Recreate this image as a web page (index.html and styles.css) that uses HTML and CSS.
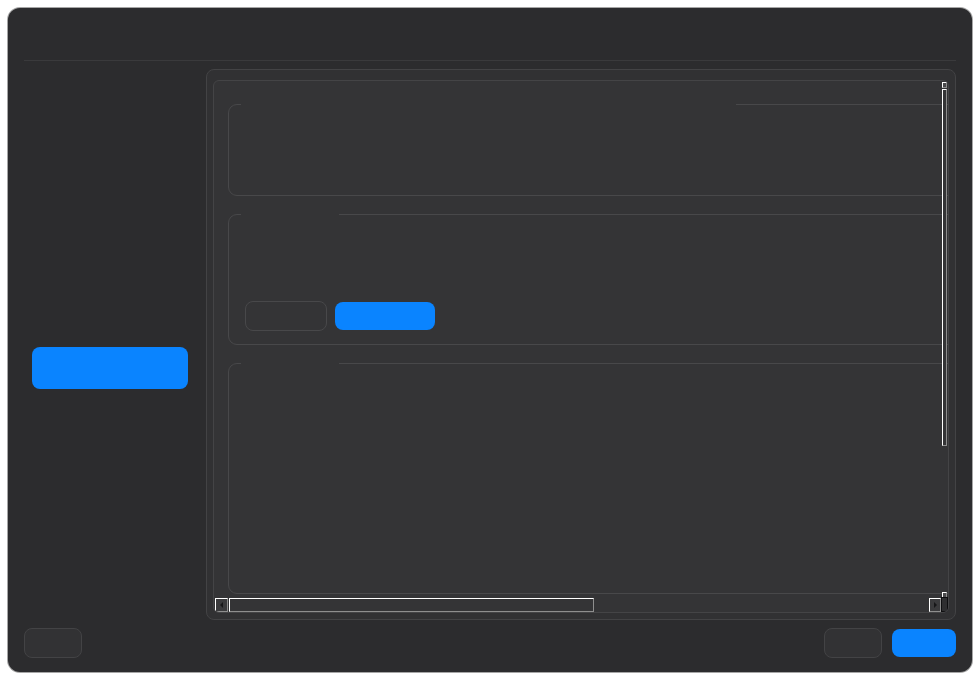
FILE: index.html
```html
<!DOCTYPE html>
<html lang="en">
<head>
<meta charset="utf-8">
<title>Dialog</title>
<link rel="stylesheet" href="styles.css">
</head>
<body>
<div class="dialog">
  <header class="dialog-header"></header>
  <div class="dialog-body">
    <aside class="sidebar">
      <button class="btn btn-primary side-btn" type="button"></button>
    </aside>
    <main class="panel">
      <div class="scroller">
        <div class="content">
          <fieldset class="group group-1">
            <legend class="legend legend-wide"></legend>
          </fieldset>
          <fieldset class="group group-2">
            <legend class="legend"></legend>
            <div class="group-actions">
              <button class="btn btn-outline btn-sm" type="button"></button>
              <button class="btn btn-primary btn-md" type="button"></button>
            </div>
          </fieldset>
          <fieldset class="group group-3">
            <legend class="legend"></legend>
          </fieldset>
        </div>
        <div class="vbar">
          <span class="vbar-btn vbar-up"></span>
          <span class="vbar-thumb"></span>
          <span class="vbar-btn vbar-down"></span>
        </div>
        <div class="hbar">
          <span class="hbar-btn hbar-left"><i class="arrow arrow-left"></i></span>
          <span class="hbar-thumb"></span>
          <span class="hbar-btn hbar-right"><i class="arrow arrow-right"></i></span>
        </div>
        <div class="sb-corner"></div>
      </div>
    </main>
  </div>
  <footer class="dialog-footer">
    <button class="btn btn-outline btn-foot" type="button"></button>
    <div class="footer-right">
      <button class="btn btn-outline btn-foot" type="button"></button>
      <button class="btn btn-primary btn-ok" type="button"></button>
    </div>
  </footer>
</div>
</body>
</html>
```

FILE: styles.css
```css
html, body {
  margin: 0;
  padding: 0;
  background: #ffffff;
  font-family: "Liberation Sans", Arial, sans-serif;
}

body {
  padding: 8px;
}

.dialog {
  width: 964px;
  height: 664px;
  box-sizing: border-box;
  background: #2c2c2e;
  border-radius: 12px;
  box-shadow: 0 0 0 1px rgba(0, 0, 0, 0.35);
  padding: 0 16px;
  display: flex;
  flex-direction: column;
}

.dialog-header {
  height: 53px;
  box-sizing: border-box;
  border-bottom: 1px solid #3a3a3c;
  flex: none;
}

.dialog-body {
  flex: none;
  height: 551px;
  margin-top: 8px;
  display: flex;
  gap: 8px;
  min-width: 0;
}

.sidebar {
  width: 174px;
  flex: none;
  box-sizing: border-box;
  padding: 278px 8px 0 8px;
}

.side-btn {
  width: 156px;
  height: 42px;
  border-radius: 8px;
}

.panel {
  flex: 1;
  min-width: 0;
  box-sizing: border-box;
  border: 1px solid #434345;
  border-radius: 8px;
  background: #313133;
  padding: 10px 6px 6px 6px;
  display: flex;
}

.scroller {
  position: relative;
  flex: 1;
  min-width: 0;
  min-height: 0;
  border: 1px solid #444446;
  border-radius: 6px;
  background: #343436;
  overflow: hidden;
}

.content {
  width: 1392px;
  box-sizing: border-box;
  padding: 23px 14px 0 14px;
  display: flex;
  flex-direction: column;
  gap: 18px;
}

.group {
  margin: 0;
  box-sizing: border-box;
  border: 1px solid #48484a;
  border-radius: 9px;
  padding: 0 16px 12px 16px;
  min-width: 0;
}

.legend {
  padding: 0;
  margin-left: -4px;
  width: 98px;
  height: 0;
  line-height: 0;
  font-size: 0;
}

.legend-wide {
  width: 495px;
}

.group-1 {
  height: 92px;
}

.group-2 {
  height: 131px;
}

.group-3 {
  height: 231px;
}

.group-actions {
  display: flex;
  align-items: center;
  gap: 8px;
  margin-top: 86px;
}

/* fake classic scrollbars drawn over the scroll area */
.vbar {
  position: absolute;
  left: 727px;
  top: 0;
  width: 7px;
  height: 517px;
}

.vbar > span,
.hbar > span {
  position: absolute;
  box-sizing: border-box;
  border-style: solid;
  border-width: 1px;
  border-color: #ffffff #8e8e8e #8e8e8e #ffffff;
  background: #343436;
}

.vbar-btn {
  left: 1px;
  width: 5px;
  height: 6px;
}

.vbar-up {
  top: 1px;
}

.vbar-down {
  top: 511px;
}

.vbar-thumb {
  left: 1px;
  top: 8px;
  width: 5px;
  height: 357px;
  border-right-width: 2px;
}

.hbar {
  position: absolute;
  left: 0;
  top: 517px;
  width: 727px;
  height: 14px;
}

.hbar-btn {
  top: 0;
  height: 14px;
  display: flex;
  align-items: center;
  justify-content: center;
}

.vbar > .vbar-btn {
  background: #4a4a4c;
}

.hbar > .hbar-btn {
  background: #3a3a3c;
}

.hbar-left {
  left: 1px;
  width: 13px;
}

.hbar-right {
  left: 715px;
  width: 12px;
}

.hbar-thumb {
  left: 15px;
  top: 0;
  width: 365px;
  height: 14px;
  border-bottom-width: 2px;
}

.arrow {
  display: block;
  width: 0;
  height: 0;
  border-top: 3px solid transparent;
  border-bottom: 3px solid transparent;
}

.arrow-left {
  border-right: 3px solid #161618;
}

.arrow-right {
  border-left: 3px solid #161618;
}

.sb-corner {
  position: absolute;
  left: 727px;
  top: 516px;
  width: 7px;
  height: 15px;
  box-sizing: border-box;
  background: #2e2e30;
  border: 1px solid #0e0e10;
}

.btn {
  display: block;
  margin: 0;
  padding: 0;
  box-sizing: border-box;
  font: inherit;
  cursor: pointer;
}

.btn-primary {
  background: #0a84ff;
  border: none;
}

.btn-outline {
  background: #323234;
  border: 1px solid #48484a;
}

.btn-sm {
  width: 82px;
  height: 30px;
  border-radius: 8px;
  background: transparent;
}

.btn-md {
  width: 100px;
  height: 28px;
  border-radius: 8px;
}

.dialog-footer {
  flex: none;
  margin-top: 8px;
  display: flex;
  align-items: center;
  justify-content: space-between;
  height: 30px;
}

.footer-right {
  display: flex;
  align-items: center;
  gap: 10px;
}

.btn-foot {
  width: 58px;
  height: 30px;
  border-radius: 8px;
  border-color: #434345;
}

.btn-ok {
  width: 64px;
  height: 28px;
  border-radius: 8px;
}
```
